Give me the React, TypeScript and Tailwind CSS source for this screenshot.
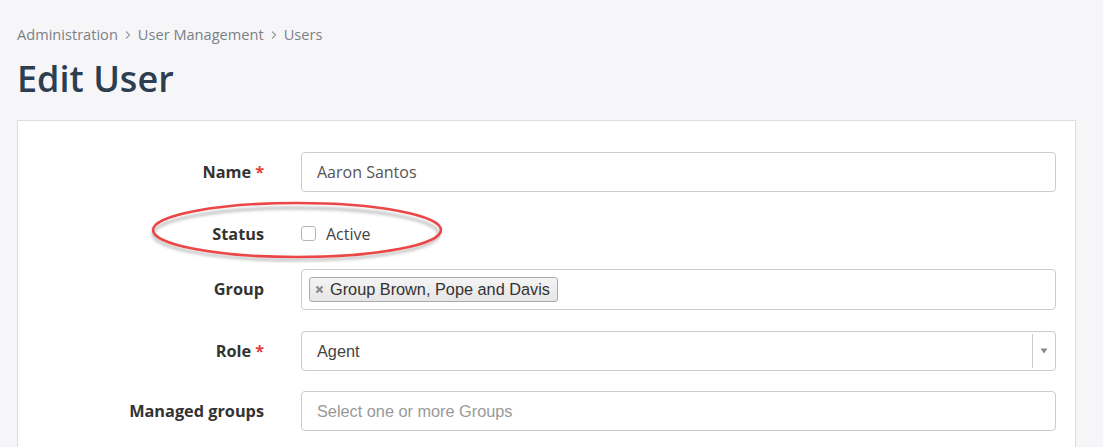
const openSans = "font-['Open_Sans',sans-serif]";
const arial = "font-['Liberation_Sans',Arial,sans-serif]";

function Label({ text, required }: { text: string; required?: boolean }) {
  return (
    <div className={`w-[246px] shrink-0 text-right text-[16.3px] font-bold text-[#333] ${openSans}`}>
      {text}
      {required && <span className="ml-1 text-[#e2403b]">*</span>}
    </div>
  );
}

function Chevron() {
  return (
    <svg width="8" height="10" viewBox="0 0 8 10" className="mx-[6px]">
      <path d="M2 1.5 L5.5 5 L2 8.5" fill="none" stroke="#9aa0a6" strokeWidth="1.3" />
    </svg>
  );
}

export default function App() {
  return (
    <div className="relative min-h-[447px] w-full overflow-hidden bg-[#f6f6f8]">
      <div className={`flex items-center pl-[17px] pt-[24px] text-[14.6px] text-[#7b8087] ${openSans}`}>
        <span>Administration</span>
        <Chevron />
        <span>User Management</span>
        <Chevron />
        <span>Users</span>
      </div>
      <h1 className={`mt-[11px] pl-[17px] text-[36px] font-semibold leading-[44px] text-[#2c3e50] ${openSans}`}>
        Edit User
      </h1>

      <div className="ml-[17px] mt-[19px] h-[360px] w-[1059px] border border-[#dddddd] bg-white pr-[19px] pt-[31px]">
        {/* Name */}
        <div className="flex items-center gap-[37px]">
          <Label text="Name" required />
          <div className={`flex h-10 flex-1 items-center rounded-[4px] border border-[#cccccc] px-[15px] text-[16px] text-[#555] ${openSans}`}>
            Aaron Santos
          </div>
        </div>

        {/* Status */}
        <div className="mt-[22px] flex h-10 items-center gap-[37px]">
          <Label text="Status" />
          <label className={`flex items-center text-[16px] text-[#444] ${openSans}`}>
            <span className="h-[15px] w-[15px] rounded-[3px] border border-[#b3b7bd] bg-white" />
            <span className="ml-[10px]">Active</span>
          </label>
        </div>

        {/* Group */}
        <div className="mt-[15px] flex items-center gap-[37px]">
          <Label text="Group" />
          <div className="flex h-[41px] flex-1 items-center rounded-[4px] border border-[#cccccc] px-[7px]">
            <span
              className={`flex h-[25px] items-center rounded-[3px] border border-[#aaaaaa] bg-gradient-to-b from-[#f4f4f4] to-[#e6e6e6] pl-[5px] pr-[7px] text-[16.3px] text-[#333] ${arial}`}
            >
              <svg width="9" height="9" viewBox="0 0 9 9" className="mr-[6px]">
                <path d="M1.5 1.5 L7.5 7.5 M7.5 1.5 L1.5 7.5" stroke="#888" strokeWidth="2.2" />
              </svg>
              Group Brown, Pope and Davis
            </span>
          </div>
        </div>

        {/* Role */}
        <div className="mt-[21px] flex items-center gap-[37px]">
          <Label text="Role" required />
          <div className={`flex h-10 flex-1 items-center rounded-[4px] border border-[#cccccc] pl-[15px] text-[16.3px] text-[#444] ${arial}`}>
            <span className="flex-1">Agent</span>
            <div className="flex h-[34px] w-[23px] items-center justify-center border-l border-[#cccccc]">
              <svg width="8" height="6" viewBox="0 0 8 6">
                <path d="M0.5 0.5 L7.5 0.5 L4 5.5 Z" fill="#888" />
              </svg>
            </div>
          </div>
        </div>

        {/* Managed groups */}
        <div className="mt-5 flex items-center gap-[37px]">
          <Label text="Managed groups" />
          <div className={`flex h-10 flex-1 items-center rounded-[4px] border border-[#cccccc] px-[15px] text-[16.3px] text-[#999] ${arial}`}>
            Select one or more Groups
          </div>
        </div>
      </div>

      {/* annotation ellipse */}
      <svg className="pointer-events-none absolute left-[148px] top-[197px]" width="300" height="66" viewBox="0 0 300 66">
        <defs>
          <filter id="sh" x="-10%" y="-30%" width="120%" height="160%">
            <feGaussianBlur stdDeviation="1.6" />
          </filter>
        </defs>
        <ellipse cx="148" cy="37" rx="143" ry="26" fill="none" stroke="#9a9a9a" strokeWidth="3" opacity="0.6" filter="url(#sh)" />
        <ellipse cx="149" cy="33" rx="144" ry="27" fill="none" stroke="#ec4646" strokeWidth="2.6" />
      </svg>
    </div>
  );
}
